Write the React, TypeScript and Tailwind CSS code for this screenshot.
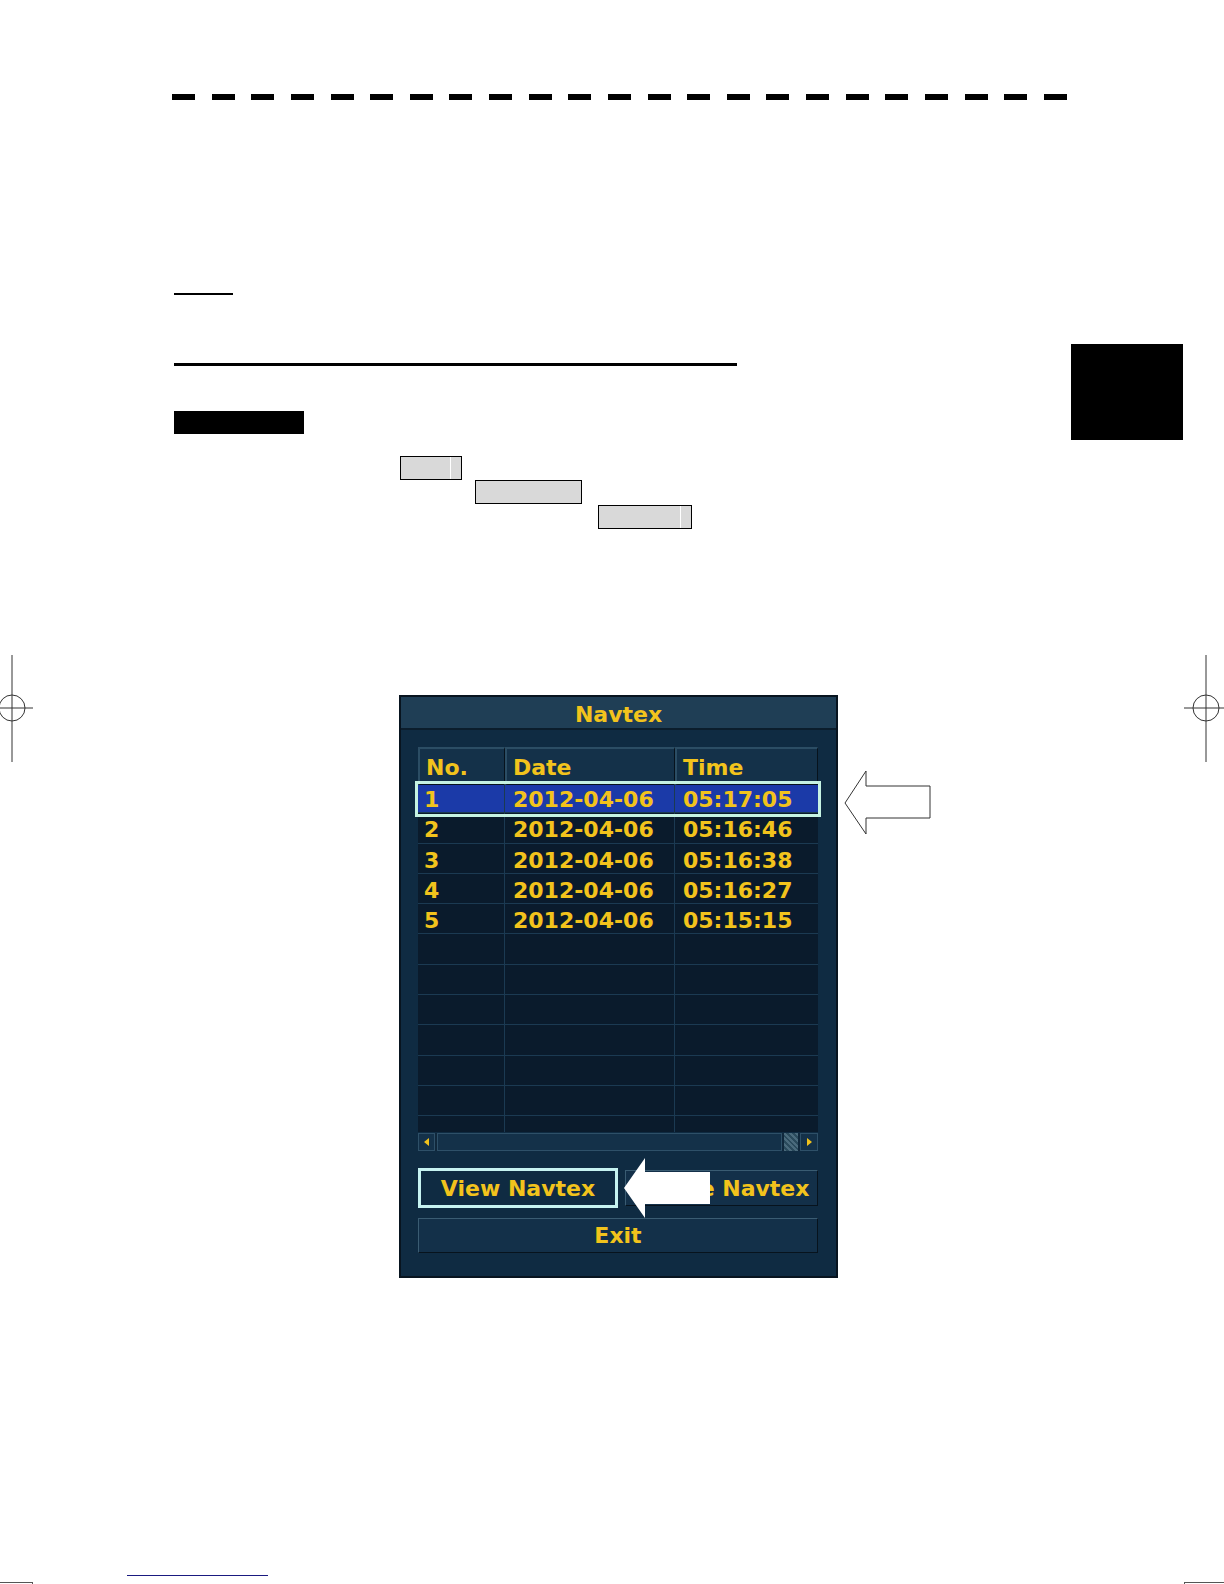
import React from 'react'

const rows = [
  { no: '1', date: '2012-04-06', time: '05:17:05' },
  { no: '2', date: '2012-04-06', time: '05:16:46' },
  { no: '3', date: '2012-04-06', time: '05:16:38' },
  { no: '4', date: '2012-04-06', time: '05:16:27' },
  { no: '5', date: '2012-04-06', time: '05:15:15' },
]

const font = { fontFamily: '"DejaVu Sans", Verdana, sans-serif' }

function CropMark({ side }: { side: 'left' | 'right' }) {
  // registration mark on the page edge
  const cx = side === 'left' ? 12 : 1206
  return (
    <svg
      className="absolute top-[654px]"
      style={{ left: cx - 24 }}
      width="48"
      height="110"
      viewBox="0 0 48 110"
    >
      <line x1="24" y1="1" x2="24" y2="108" stroke="#333" strokeWidth="1" />
      <line x1={side === 'left' ? 12 : 2} y1="54" x2={side === 'left' ? 45 : 48} y2="54" stroke="#333" strokeWidth="1" />
      <circle cx="24" cy="54" r="13" fill="none" stroke="#333" strokeWidth="1" />
    </svg>
  )
}

function GrayBox({ cls, notch }: { cls: string; notch?: boolean }) {
  return (
    <div className={`${cls} relative h-[24px] border border-black bg-[#d9d9d9]`}>
      {notch && <div className="absolute right-[10px] top-0 h-full w-px bg-white" />}
    </div>
  )
}

function Navtex() {
  const cell = 'border-r border-[#1b3a52] last:border-r-0 flex items-center'
  return (
    <div className="relative ml-[227px] mt-[166px] h-[583px] w-[439px] border-2 border-[#08141f] bg-[#0f2b42]" style={font}>
      {/* title */}
      <div className="flex h-[33px] items-center justify-center border-b-2 border-[#0b1d2c] bg-[#1f3e55] pt-[3px] text-[22px] font-bold text-[#f2c31c]">
        Navtex
      </div>

      <div className="px-[17px] pt-[17px]">
        <div className="w-[400px]">
          {/* header */}
          <div className="grid h-[34px] grid-cols-[87px_170px_143px] text-[22px] font-bold text-[#f2c31c]">
            {['No.', 'Date', 'Time'].map((h) => (
              <div
                key={h}
                className="flex items-center border-b border-l-2 border-r border-t-2 border-b-[#07131d] border-l-[#2b4d64] border-r-[#07131d] border-t-[#2b4d64] bg-[#143149] pl-[6px] pt-[2px]"
              >
                {h}
              </div>
            ))}
          </div>

          {/* body */}
          <div className="mt-[2px] h-[349px] overflow-hidden bg-[#0a1b2c]">
            {Array.from({ length: 12 }).map((_, i) => {
              const r = rows[i]
              return (
                <div
                  key={i}
                  className={`grid h-[30.3px] grid-cols-[87px_170px_143px] border-b border-[#1b3a52] text-[22px] font-bold text-[#f2c31c] ${i === 0 ? 'bg-[#1b3aa8]' : ''}`}
                >
                  <div className={`${cell} pl-[6px]`}>{r?.no}</div>
                  <div className={`${cell} pl-[8px]`}>{r?.date}</div>
                  <div className={`${cell} pl-[8px]`}>{r?.time}</div>
                </div>
              )
            })}
          </div>

          {/* scrollbar */}
          <div className="mt-[1px] flex h-[18px] items-stretch gap-[2px] bg-[#10283c]">
            <div className="flex w-[17px] items-center justify-center border border-[#2e5068] bg-[#143149]">
              <div className="h-0 w-0 border-y-[4px] border-r-[5px] border-y-transparent border-r-[#f2c31c]" />
            </div>
            <div className="flex-1 border border-[#2e5068] bg-[#143149]" />
            <div className="w-[14px] bg-[repeating-linear-gradient(45deg,#4a6a7c_0_2px,#2a4a5c_2px_4px)]" />
            <div className="flex w-[18px] items-center justify-center border border-[#2e5068] bg-[#143149]">
              <div className="h-0 w-0 border-y-[4px] border-l-[5px] border-y-transparent border-l-[#f2c31c]" />
            </div>
          </div>

          {/* buttons */}
          <div className="relative mt-[17px] flex h-[40px] items-center gap-[7px]">
            <div className="flex h-full w-[200px] items-center justify-center border-[3px] border-[#c6f3f1] bg-[#0f2b42] text-[22px] font-bold text-[#f2c31c]">
              View Navtex
            </div>
            <div className="flex h-[36px] flex-1 items-center justify-center border border-[#3a5c72] border-b-[#07131d] border-r-[#07131d] bg-[#133049] text-[22px] font-bold text-[#f2c31c]">
              Delete Navtex
            </div>
            {/* white pointer arrow */}
            <svg className="absolute left-[206px] top-[-10px]" width="87" height="60" viewBox="0 0 87 60">
              <polygon points="0,30 21,0 21,14 86,14 86,46 21,46 21,60" fill="#fff" />
            </svg>
          </div>

          <div className="mt-[10px] flex h-[35px] items-center justify-center border border-[#3a5c72] border-b-[#07131d] border-r-[#07131d] bg-[#133049] text-[22px] font-bold text-[#f2c31c]">
            Exit
          </div>
        </div>
      </div>

      {/* selection frame over row 1 */}
      <div className="absolute left-[14px] top-[84px] h-[36px] w-[406px] border-[3px] border-[#c6f3e3]" />

      {/* outline arrow pointing at row 1 */}
      <svg className="absolute left-[443px] top-[73px]" width="88" height="66" viewBox="0 0 88 66">
        <polygon points="1,33 22,1 22,16 86,16 86,48 22,48 22,64" fill="#fff" stroke="#333" strokeWidth="1" />
      </svg>
    </div>
  )
}

export default function App() {
  return (
    <div className="relative h-[1584px] w-[1224px] overflow-hidden bg-white">
      <div className="pl-[172px] pt-[94px]">
        {/* dashed header rule */}
        <div className="flex w-[895px] justify-between">
          {Array.from({ length: 23 }).map((_, i) => (
            <div key={i} className="h-[6px] w-[23px] bg-black" />
          ))}
        </div>

        <div className="flex pl-[2px]">
          <div className="w-[563px]">
            <div className="mt-[193px] h-[2px] w-[59px] bg-black" />
            <div className="mt-[68px] h-[3px] w-[563px] bg-black" />
            <div className="mt-[45px] h-[23px] w-[130px] bg-black" />
          </div>
          <div className="ml-[334px] mt-[244px] h-[96px] w-[112px] bg-black" />
        </div>

        <div className="mt-[16px] flex flex-col">
          <GrayBox cls="ml-[228px] w-[62px]" notch />
          <GrayBox cls="ml-[303px] w-[107px]" />
          <GrayBox cls="ml-[426px] mt-[1px] w-[94px]" notch />
        </div>

        <Navtex />
      </div>

      <CropMark side="left" />
      <CropMark side="right" />

      {/* bottom trim marks */}
      <div className="absolute bottom-0 left-0 h-[2px] w-[33px] border-r border-t border-[#555]" />
      <div className="absolute left-[127px] top-[1575px] h-px w-[141px] bg-[#1a1a80]" />
      <div className="absolute bottom-0 left-[1184px] h-[2px] w-[40px] border-l border-t border-[#555]" />
    </div>
  )
}
